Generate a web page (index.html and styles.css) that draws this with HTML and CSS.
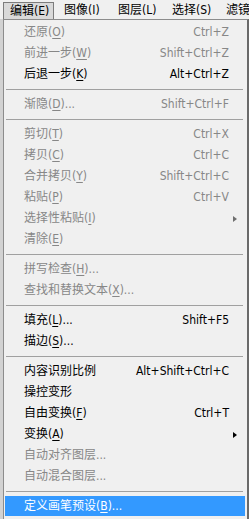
FILE: index.html
```html
<!DOCTYPE html>
<html lang="zh-CN">
<head>
<meta charset="utf-8">
<title>编辑菜单</title>
<link rel="stylesheet" href="styles.css">
</head>
<body>
<div class="menubar">
  <div class="mb-item active">编辑(E)</div>
  <div class="mb-item">图像(I)</div>
  <div class="mb-item">图层(L)</div>
  <div class="mb-item">选择(S)</div>
  <div class="mb-item last">滤镜</div>
</div>
<div class="menu">
  <div class="item off"><span class="lbl">还原(<u>O</u>)</span><span class="sc">Ctrl+Z</span></div>
  <div class="item off"><span class="lbl">前进一步(<u>W</u>)</span><span class="sc">Shift+Ctrl+Z</span></div>
  <div class="item"><span class="lbl">后退一步(<u>K</u>)</span><span class="sc">Alt+Ctrl+Z</span></div>
  <div class="sep"></div>
  <div class="item off"><span class="lbl">渐隐(<u>D</u>)...</span><span class="sc">Shift+Ctrl+F</span></div>
  <div class="sep"></div>
  <div class="item off"><span class="lbl">剪切(<u>T</u>)</span><span class="sc">Ctrl+X</span></div>
  <div class="item off"><span class="lbl">拷贝(<u>C</u>)</span><span class="sc">Ctrl+C</span></div>
  <div class="item off"><span class="lbl">合并拷贝(<u>Y</u>)</span><span class="sc">Shift+Ctrl+C</span></div>
  <div class="item off"><span class="lbl">粘贴(<u>P</u>)</span><span class="sc">Ctrl+V</span></div>
  <div class="item off"><span class="lbl">选择性粘贴(<u>I</u>)</span><span class="sc"></span><span class="arrow"></span></div>
  <div class="item off"><span class="lbl">清除(<u>E</u>)</span></div>
  <div class="sep"></div>
  <div class="item off"><span class="lbl">拼写检查(<u>H</u>)...</span></div>
  <div class="item off"><span class="lbl">查找和替换文本(<u>X</u>)...</span></div>
  <div class="sep"></div>
  <div class="item"><span class="lbl">填充(<u>L</u>)...</span><span class="sc">Shift+F5</span></div>
  <div class="item"><span class="lbl">描边(<u>S</u>)...</span></div>
  <div class="sep"></div>
  <div class="item"><span class="lbl">内容识别比例</span><span class="sc">Alt+Shift+Ctrl+C</span></div>
  <div class="item"><span class="lbl">操控变形</span></div>
  <div class="item"><span class="lbl">自由变换(<u>F</u>)</span><span class="sc">Ctrl+T</span></div>
  <div class="item"><span class="lbl">变换(<u>A</u>)</span><span class="sc"></span><span class="arrow"></span></div>
  <div class="item off"><span class="lbl">自动对齐图层...</span></div>
  <div class="item off"><span class="lbl">自动混合图层...</span></div>
  <div class="sep"></div>
  <div class="item hot"><span class="lbl">定义画笔预设(<u>B</u>)...</span></div>
</div>
</body>
</html>
```

FILE: styles.css
```css
html, body {
  margin: 0;
  padding: 0;
}
body {
  width: 249px;
  height: 519px;
  overflow: hidden;
  background: #d2d2d2;
  font-family: "DejaVu Sans Condensed", "DejaVu Sans", "Noto Sans CJK SC", sans-serif;
  font-stretch: condensed;
  font-size: 12px;
  color: #000;
}
u {
  text-decoration: underline;
  text-underline-offset: 2px;
}
.menubar {
  display: flex;
  height: 19px;
  background: #f0f0f0;
  padding-left: 3px;
  box-sizing: border-box;
  overflow: hidden;
}
.mb-item {
  width: 51px;
  margin-right: 3px;
  padding: 3px 0 0 7px;
  box-sizing: border-box;
  line-height: 15px;
  white-space: nowrap;
  flex: none;
}
.mb-item.last {
  width: 30px;
  margin-right: 0;
  overflow: hidden;
}
.mb-item.active {
  margin-top: 2px;
  padding-top: 1px;
  background: #d9d9d9;
  border: 1px solid #7c7c7c;
  border-bottom: none;
  padding-left: 6px;
}
.menu {
  margin-left: 3px;
  border-left: 1px solid #8c8c8c;
  border-top: 1px solid #8c8c8c;
  border-right: 2px solid #6a6a6a;
  background: #f0f0f0;
  padding: 2px 2px 0 1px;
  height: 500px;
  box-sizing: border-box;
  overflow: hidden;
}
.item {
  display: grid;
  grid-template-columns: 1fr auto 16px;
  align-items: center;
  height: 21px;
  line-height: 21px;
  padding-left: 19px;
  white-space: nowrap;
  color: #000;
}
.item.off {
  color: #878787;
}
.item.hot {
  background: #3399ff;
  color: #fff;
  height: 20px;
  line-height: 20px;
}
.sc {
  text-align: right;
}
.arrow {
  width: 0;
  height: 0;
  margin-left: 4px;
  border-left: 4px solid #000;
  border-top: 3.5px solid transparent;
  border-bottom: 3.5px solid transparent;
}
.item.off .arrow {
  border-left-color: #6e6e6e;
}
.sep {
  height: 9px;
  display: flex;
  align-items: center;
  margin: 0 2px 0 1px;
}
.sep::before {
  content: "";
  display: block;
  width: 100%;
  height: 1px;
  background: #a0a0a0;
}
```
